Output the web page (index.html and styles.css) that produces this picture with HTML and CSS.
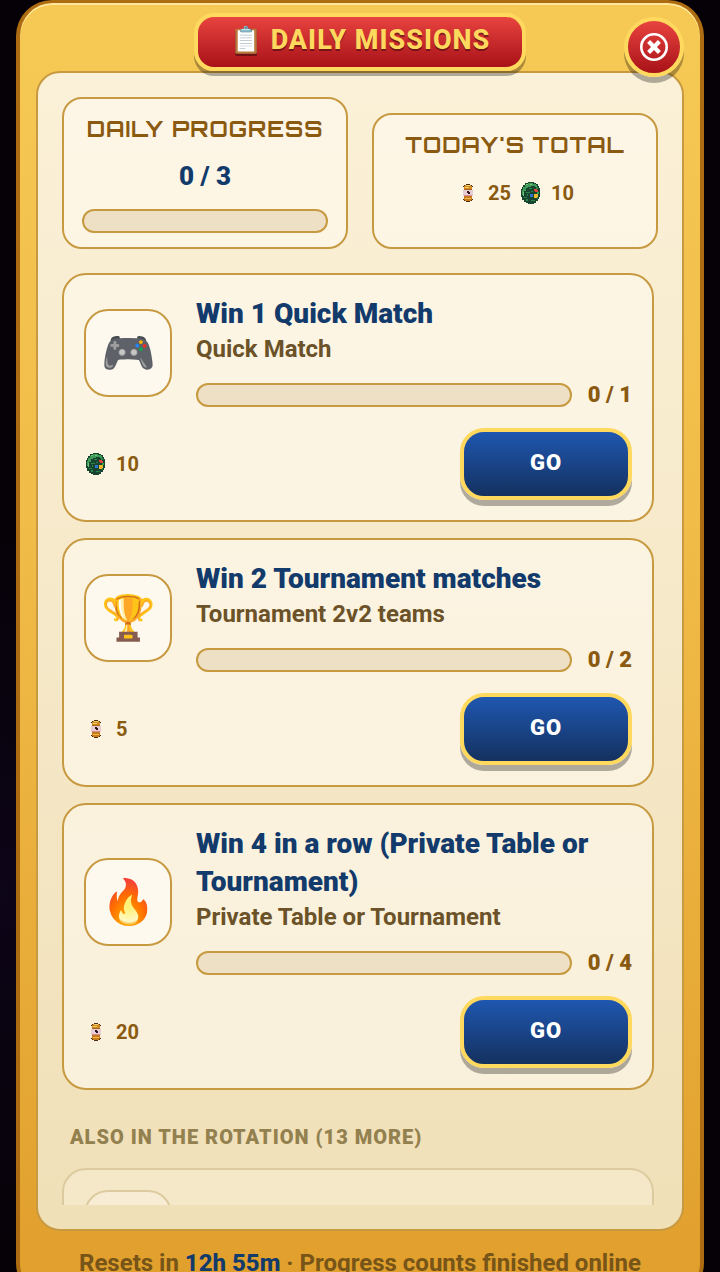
FILE: index.html
```html
<!DOCTYPE html>
<html lang="en">
<head>
    <meta charset="UTF-8">
    <meta name="viewport" content="width=device-width, initial-scale=1.0">
    <title>Daily Missions</title>
    <link rel="stylesheet" href="styles.css">
</head>
<body>
    <!-- Reward sprites -->
    <svg class="sprites" aria-hidden="true">
        <symbol id="capsule" viewBox="0 0 24 24" shape-rendering="crispEdges">
            <path d="M10 3h4v1h2v1h1v1h-1v3h1v6h-1v3h1v1h-1v1h-2v1h-4v-1H8v-1H7v-1h1v-3H7V9h1V6H7V5h1V4h2z" fill="#4a2b10"/>
            <path d="M9 4h6v1h1v4H8V5h1z" fill="#cf8a24"/>
            <path d="M10 4h4v1h-4zM9 6h4v1H9z" fill="#f8cf62"/>
            <path d="M8 8h8v1H8z" fill="#a8641c"/>
            <path d="M7 9h10v6H7z" fill="#e6cdd4"/>
            <path d="M11 10h2v1h1v2h-2v-1h-1z" fill="#32151c"/>
            <path d="M8 14h8v1H8z" fill="#d58b96"/>
            <path d="M8 15h8v4h-1v1H9v-1H8z" fill="#c77a1b"/>
            <path d="M9 17h6v1H9z" fill="#f1bd4a"/>
        </symbol>
        <symbol id="orb" viewBox="0 0 24 24" shape-rendering="crispEdges">
            <path d="M9 1h6v1h2v1h2v2h1v2h1v9h-1v2h-1v2h-2v2h-2v1H9v-1H7v-1H5v-2H3v-3H2V8h1V6h1V4h2V2h3z" fill="#17452f"/>
            <path d="M9 2h5v1h3v1h1v2h-2V5h-4v1H9v1H7v3H5v4H3V9h1V6h2V4h3z" fill="#3f9a58"/>
            <path d="M10 7h3v1h-3zM7 11h4v1H7zM12 10h2v1h-2zM5 16h3v1H5zM7 18h2v2H7zM12 19h4v1h-4zM17 6h2v2h-2zM18 16h1v2h-1zM8 13h1v2H8z" fill="#2d8649"/>
            <path d="M7 3h2v1H7zM4 11h1v4H4zM11 3h2v1h-2z" fill="#71c77e"/>
            <path d="M15 8h3v1h1v2h-3v-1h-1z" fill="#e2433f"/>
            <path d="M11 13h3v3h-3z" fill="#2f76d2"/>
            <path d="M15 13h4v3h-1v1h-3z" fill="#efb82e"/>
            <path d="M18 11h2v2h-2z" fill="#25a34b"/>
        </symbol>
    </svg>

    <div class="modal">
        <header class="modal-header">
            <h1 class="modal-title"><span class="title-icon">📋</span>DAILY MISSIONS</h1>
            <button class="close-btn" type="button" aria-label="Close">
                <svg viewBox="0 0 28 28" width="28" height="28" fill="none" stroke="#fff">
                    <circle cx="14" cy="14" r="12.7" stroke-width="2.6"/>
                    <path d="M8.6 8.6l10.8 10.8M19.4 8.6L8.6 19.4" stroke-width="4.2"/>
                </svg>
            </button>
        </header>

        <main class="panel">
            <section class="summary">
                <div class="summary-card">
                    <h2 class="summary-title">DAILY PROGRESS</h2>
                    <div class="summary-value">0 / 3</div>
                    <div class="bar"></div>
                </div>
                <div class="summary-card summary-card-total">
                    <h2 class="summary-title">TODAY'S TOTAL</h2>
                    <div class="rewards">
                        <svg class="reward-icon"><use href="#capsule"/></svg>
                        <span>25</span>
                        <svg class="reward-icon"><use href="#orb"/></svg>
                        <span>10</span>
                    </div>
                </div>
            </section>

            <section class="mission-list">
                <article class="mission">
                    <div class="mission-icon">🎮</div>
                    <div class="mission-info">
                        <h3 class="mission-title">Win 1 Quick Match</h3>
                        <p class="mission-mode">Quick Match</p>
                        <div class="mission-progress">
                            <div class="bar"></div>
                            <span class="mission-count">0 / 1</span>
                        </div>
                    </div>
                    <div class="mission-footer">
                        <div class="rewards">
                            <svg class="reward-icon"><use href="#orb"/></svg>
                            <span>10</span>
                        </div>
                        <button class="go-btn" type="button">GO</button>
                    </div>
                </article>

                <article class="mission">
                    <div class="mission-icon">🏆</div>
                    <div class="mission-info">
                        <h3 class="mission-title">Win 2 Tournament matches</h3>
                        <p class="mission-mode">Tournament 2v2 teams</p>
                        <div class="mission-progress">
                            <div class="bar"></div>
                            <span class="mission-count">0 / 2</span>
                        </div>
                    </div>
                    <div class="mission-footer">
                        <div class="rewards">
                            <svg class="reward-icon"><use href="#capsule"/></svg>
                            <span>5</span>
                        </div>
                        <button class="go-btn" type="button">GO</button>
                    </div>
                </article>

                <article class="mission">
                    <div class="mission-icon">🔥</div>
                    <div class="mission-info">
                        <h3 class="mission-title">Win 4 in a row (Private Table or Tournament)</h3>
                        <p class="mission-mode">Private Table or Tournament</p>
                        <div class="mission-progress">
                            <div class="bar"></div>
                            <span class="mission-count">0 / 4</span>
                        </div>
                    </div>
                    <div class="mission-footer">
                        <div class="rewards">
                            <svg class="reward-icon"><use href="#capsule"/></svg>
                            <span>20</span>
                        </div>
                        <button class="go-btn" type="button">GO</button>
                    </div>
                </article>

                <h2 class="rotation-title">ALSO IN THE ROTATION (13 MORE)</h2>
                <article class="mission mission-locked">
                    <div class="mission-icon"></div>
                </article>
            </section>
        </main>

        <footer class="modal-footer">Resets in <strong>12h 55m</strong> · Progress counts finished online</footer>
    </div>
</body>
</html>
```
FILE: styles.css
```css
* {
    box-sizing: border-box;
}

body {
    margin: 0;
    padding: 0 16px;
    height: 100vh;
    overflow: hidden;
    background: radial-gradient(ellipse at 0 70%, #0d0518, #050106 30%);
    font-family: Roboto, "Liberation Sans", sans-serif;
    font-weight: 700;
}

h1,
h2,
h3,
p {
    margin: 0;
}

.sprites {
    display: none;
}

/* The footer runs past the bottom of the window */
.modal {
    position: relative;
    display: flex;
    flex-direction: column;
    height: calc(100vh + 27px);
    padding: 10px 16px 16px;
    border: 4px solid #ad6c12;
    border-top-width: 3px;
    border-radius: 36px;
    background: linear-gradient(to bottom, #f6c955, #f1bc48 40%, #e19f2c);
    box-shadow: inset 0 2px 0 #ffe69a;
}

.modal-header {
    display: flex;
    justify-content: center;
    z-index: 1;
}

.modal-title {
    display: flex;
    align-items: center;
    gap: 8px;
    height: 58px;
    padding: 0 32px 4px;
    border: 4px solid #ffd95e;
    border-radius: 20px;
    background: linear-gradient(to bottom, #e8433f, #a81218);
    box-shadow: 0 5px 0 rgba(0, 0, 0, 0.3);
    color: #ffd95e;
    font-size: 27px;
    font-weight: 800;
    letter-spacing: 1px;
    text-shadow: 0 2px 0 rgba(0, 0, 0, 0.4);
}

.title-icon {
    font-size: 26px;
}

.close-btn {
    position: absolute;
    top: 14px;
    right: 16px;
    display: flex;
    align-items: center;
    justify-content: center;
    width: 60px;
    height: 60px;
    padding: 0;
    border: 4px solid #ffd95e;
    border-radius: 50%;
    background: linear-gradient(to bottom, #e8433f, #a81218);
    box-shadow: 0 6px 0 rgba(0, 0, 0, 0.3);
    cursor: pointer;
}

.panel {
    display: flex;
    flex-direction: column;
    flex: 1;
    gap: 24px;
    min-height: 0;
    padding: 24px;
    border: 2px solid #c79a42;
    border-radius: 24px;
    background: linear-gradient(to bottom, #fbf1d8, #f0e0b8);
}

.summary {
    display: grid;
    grid-template-columns: 1fr 1fr;
    gap: 24px;
}

.summary-card {
    padding: 14px 18px;
    border: 2px solid #c79a42;
    border-radius: 20px;
    background: rgba(255, 250, 240, 0.6);
    text-align: center;
}

.summary-card-total {
    margin-top: 16px;
}

.summary-title {
    color: #8a5a10;
    font-family: Orbitron, "DejaVu Sans", sans-serif;
    font-size: 22px;
    font-weight: 700;
    line-height: 32px;
    letter-spacing: 1px;
    white-space: nowrap;
}

.summary-value {
    margin: 11px 0 13px;
    color: #123a6b;
    font-size: 26px;
    font-weight: 900;
    line-height: 40px;
}

.bar {
    flex: 1;
    height: 24px;
    border: 2px solid #c79a42;
    border-radius: 12px;
    background: #eee0c4;
}

.rewards {
    display: flex;
    align-items: center;
    gap: 8px;
    color: #8a5a10;
    font-size: 20px;
    line-height: 40px;
}

.summary-card .rewards {
    justify-content: center;
    margin-top: 12px;
}

.reward-icon {
    width: 24px;
    height: 24px;
}

.mission-list {
    display: flex;
    flex-direction: column;
    flex: 1;
    gap: 16px;
    min-height: 0;
    padding-right: 4px;
    overflow-y: auto;
    scrollbar-width: none;
}

.mission {
    display: grid;
    grid-template-columns: 88px 1fr;
    align-items: center;
    flex-shrink: 0;
    gap: 17px 24px;
    padding: 20px;
    border: 2px solid #c79a42;
    border-radius: 24px;
    background: rgba(255, 250, 240, 0.6);
}

.mission-icon {
    display: flex;
    align-items: center;
    justify-content: center;
    height: 88px;
    border: 2px solid #c79a42;
    border-radius: 24px;
    background: #fef9ee;
    font-size: 44px;
    line-height: 52px;
}

.mission-title {
    color: #123a6b;
    font-size: 28px;
    font-weight: 900;
    line-height: 38px;
}

.mission-mode {
    color: #6b5228;
    font-size: 24px;
    font-weight: 700;
    line-height: 32px;
}

.mission-progress {
    display: flex;
    align-items: center;
    gap: 16px;
    margin-top: 14px;
    line-height: 32px;
}

.mission-count {
    color: #8a5a10;
    font-size: 22px;
    font-weight: 900;
}

.mission-footer {
    grid-column: 1 / -1;
    display: flex;
    align-items: center;
    justify-content: space-between;
}

.go-btn {
    width: 172px;
    height: 72px;
    padding: 0 0 4px;
    border: 4px solid #ffd95e;
    border-radius: 24px;
    background: linear-gradient(to bottom, #1f57b0, #14315f);
    box-shadow: 0 6px 0 rgba(0, 0, 0, 0.3);
    color: #fff;
    font-family: inherit;
    font-size: 22px;
    font-weight: 900;
    letter-spacing: 1px;
    cursor: pointer;
}

.rotation-title {
    padding: 16px 8px 0;
    color: #93804f;
    font-size: 20px;
    font-weight: 900;
    line-height: 30px;
    letter-spacing: 1px;
}

.mission-locked {
    border-color: #ddcb9f;
    background: #f5e8c9;
}

.mission-locked .mission-icon {
    border-color: #ddcb9f;
    background: #f8ecd5;
}

.modal-footer {
    padding-top: 16px;
    color: #775417;
    font-size: 24px;
    font-weight: 700;
    line-height: 32px;
    text-align: center;
}

.modal-footer strong {
    color: #123a6b;
    font-weight: 800;
}
```
